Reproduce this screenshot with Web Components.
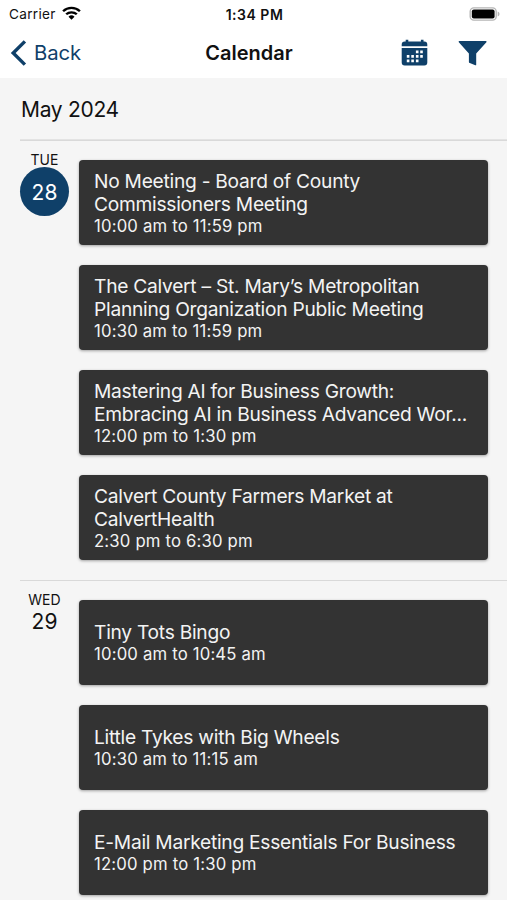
<!DOCTYPE html>
<html lang="en">
<head>
<meta charset="utf-8">
<title>Calendar</title>
<style>
    body {
        margin: 0;
        height: 900px;
        overflow: hidden;
        background-color: #f5f5f5;
        color: #111;
        font-family: Inter, "Liberation Sans", sans-serif;
    }
</style>
</head>
<body>
<calendar-screen>
    <status-bar slot="top" carrier="Carrier" time="1:34 PM"></status-bar>
    <nav-bar slot="top" back="Back">Calendar</nav-bar>
    <month-header>May 2024</month-header>
    <day-group weekday="TUE" date="28" today>
        <event-card time="10:00 am to 11:59 pm">No Meeting - Board of County Commissioners Meeting</event-card>
        <event-card time="10:30 am to 11:59 pm">The Calvert – St. Mary’s Metropolitan Planning Organization Public Meeting</event-card>
        <event-card time="12:00 pm to 1:30 pm">Mastering AI for Business Growth: Embracing AI in Business Advanced Wor...</event-card>
        <event-card time="2:30 pm to 6:30 pm">Calvert County Farmers Market at CalvertHealth</event-card>
    </day-group>
    <day-group weekday="WED" date="29">
        <event-card time="10:00 am to 10:45 am">Tiny Tots Bingo</event-card>
        <event-card time="10:30 am to 11:15 am">Little Tykes with Big Wheels</event-card>
        <event-card time="12:00 pm to 1:30 pm">E-Mail Marketing Essentials For Business</event-card>
    </day-group>
</calendar-screen>

<script>
class CalendarScreen extends HTMLElement {
    constructor() {
        super();
        this.attachShadow({ mode: 'open' });
        this.shadowRoot.innerHTML = `
        <style>
            :host {
                display: flex;
                flex-direction: column;
                height: 900px;
                overflow: hidden;
            }
            header {
                flex: none;
                background-color: #fff;
            }
            main {
                flex: 1;
                min-height: 0;
                overflow: hidden;
            }
        </style>
        <header><slot name="top"></slot></header>
        <main><slot></slot></main>
        `;
    }
}

class StatusBar extends HTMLElement {
    constructor() {
        super();
        this.attachShadow({ mode: 'open' });
        this.shadowRoot.innerHTML = `
        <style>
            :host {
                display: grid;
                grid-template-columns: 1fr auto 1fr;
                align-items: center;
                height: 27px;
                padding: 0 7px 0 9px;
                font-size: 13.6px;
                line-height: 27px;
            }
            .carrier {
                display: flex;
                align-items: center;
                gap: 6px;
                letter-spacing: 0.3px;
            }
            .carrier span {
                padding-top: 1px;
            }
            .carrier svg {
                margin-bottom: 3px;
            }
            .time {
                font-size: 14px;
                font-weight: 600;
                letter-spacing: 0.5px;
            }
            .battery {
                justify-self: end;
            }
            svg {
                display: block;
            }
        </style>
        <div class="carrier">
            <span>${this.getAttribute('carrier')}</span>
            <svg width="19" height="14" viewBox="0 0 19 15" preserveAspectRatio="none" fill="none" stroke="#000" stroke-width="2.4">
                <path d="M1.1 5.6a11.9 11.9 0 0 1 16.8 0"/>
                <path d="M4.2 8.9a7.5 7.5 0 0 1 10.6 0"/>
                <path d="M9.5 14.6l-3-3.1a4.3 4.3 0 0 1 6 0z" fill="#000" stroke="none"/>
            </svg>
        </div>
        <div class="time">${this.getAttribute('time')}</div>
        <svg class="battery" width="31" height="14" viewBox="0 0 31 14">
            <rect x="1.2" y="0.9" width="26" height="12.2" rx="3.6" fill="#fff" stroke="#b5b5b5" stroke-width="1.4"/>
            <rect x="2.8" y="2.5" width="22.8" height="9" rx="2" fill="#000"/>
            <path d="M28.7 4.6c2.4.9 2.4 4 0 4.9z" fill="#b5b5b5"/>
        </svg>
        `;
    }
}

class NavBar extends HTMLElement {
    constructor() {
        super();
        this.attachShadow({ mode: 'open' });
        this.shadowRoot.innerHTML = `
        <style>
            :host {
                display: grid;
                grid-template-columns: 1fr auto 1fr;
                align-items: center;
                height: 51px;
                padding: 0 20px 0 10px;
                color: #0f4069;
                line-height: 24px;
            }
            .back {
                display: flex;
                align-items: center;
                gap: 7px;
                font-size: 20.3px;
                letter-spacing: -0.1px;
            }
            h1 {
                margin: 0;
                padding-left: 1px;
                color: #111;
                font-size: 20px;
                font-weight: 600;
            }
            .actions {
                display: flex;
                justify-content: flex-end;
                align-items: center;
                gap: 30.5px;
            }
            svg {
                display: block;
            }
        </style>
        <div class="back">
            <svg width="17" height="26" viewBox="0 0 17 26" fill="none" stroke="currentColor" stroke-width="3.4">
                <path d="M14.9 1.4L3.2 13l11.7 11.6"/>
            </svg>
            <span>${this.getAttribute('back')}</span>
        </div>
        <h1><slot></slot></h1>
        <div class="actions">
            <svg width="27" height="27" viewBox="0 0 27 27" fill="currentColor">
                <path d="M.7 7.2V5.4Q.7 2.4 3.7 2.4h1V.8h2.6v1.6h12.6V.8h2.6v1.6h.8q3 0 3 3v1.8z"/>
                <path d="M.7 9.1h25.6v14.4q0 3-3 3H3.7q-3 0-3-3z"/>
                <g fill="#fff">
                    <path d="M14.9 11.6h2.6v2.6h-2.6zM19.2 11.6h2.6v2.6h-2.6z"/>
                    <path d="M5.8 16.1h2.6v2.6H5.8zM10.3 16.1h2.6v2.6h-2.6zM14.9 16.1h2.6v2.6h-2.6zM19.2 16.1h2.6v2.6h-2.6z"/>
                    <path d="M5.8 20.6h2.6v2.6H5.8zM10.3 20.6h2.6v2.6h-2.6zM14.9 20.6h2.6v2.6h-2.6z"/>
                </g>
            </svg>
            <svg width="29" height="26" viewBox="0 0 29 26" fill="currentColor">
                <path d="M1.4 1h26.4q1.2 0 .6 1.2L18.2 13.4V24.7q0 .8-.9.5l-5.5-2.1q-.9-.4-.9-1.2v-8.5L.8 2.2Q.2 1 1.4 1z"/>
            </svg>
        </div>
        `;
    }
}

class MonthHeader extends HTMLElement {
    constructor() {
        super();
        this.attachShadow({ mode: 'open' });
        this.shadowRoot.innerHTML = `
        <style>
            :host {
                display: block;
                box-sizing: border-box;
                height: 62px;
                margin-left: 20px;
                border-bottom: 1px solid #e3e3e3;
                padding-left: 1px;
                font-size: 21px;
                line-height: 64px;
                letter-spacing: -0.3px;
            }
        </style>
        <slot></slot>
        `;
    }
}

class DayGroup extends HTMLElement {
    constructor() {
        super();
        this.attachShadow({ mode: 'open' });
        this.shadowRoot.innerHTML = `
        <style>
            :host {
                display: flex;
                gap: 10px;
                margin-left: 20px;
                border-top: 1px solid #d9d9d9;
                padding-right: 19.5px;
            }
            .day {
                flex: none;
                width: 49px;
                padding-top: 11px;
                text-align: center;
            }
            .weekday {
                font-size: 14px;
                line-height: 15px;
                letter-spacing: 0.1px;
            }
            .date {
                font-size: 21px;
                line-height: 30px;
            }
            :host([today]) .date {
                height: 49px;
                border-radius: 50%;
                background-color: #0f4069;
                color: #fff;
                line-height: 51px;
            }
            .events {
                flex: 1;
                display: flex;
                flex-direction: column;
                gap: 20px;
                padding: 19px 0 20px;
            }
        </style>
        <div class="day">
            <div class="weekday">${this.getAttribute('weekday')}</div>
            <div class="date">${this.getAttribute('date')}</div>
        </div>
        <div class="events"><slot></slot></div>
        `;
    }
}

class EventCard extends HTMLElement {
    constructor() {
        super();
        this.attachShadow({ mode: 'open' });
        this.shadowRoot.innerHTML = `
        <style>
            :host {
                display: flex;
                flex-direction: column;
                justify-content: center;
                box-sizing: border-box;
                height: 85px;
                padding: 1px 15px 0;
                border-radius: 4px;
                background-color: #333;
                box-shadow: 0 1px 3px rgba(0, 0, 0, 0.35);
                color: #f3f3f3;
            }
            .title {
                font-size: 19.2px;
                line-height: 23px;
                letter-spacing: -0.26px;
            }
            .time {
                font-size: 16.7px;
                line-height: 21px;
                letter-spacing: 0.18px;
            }
        </style>
        <div class="title"><slot></slot></div>
        <div class="time">${this.getAttribute('time')}</div>
        `;
    }
}

customElements.define('calendar-screen', CalendarScreen);
customElements.define('status-bar', StatusBar);
customElements.define('nav-bar', NavBar);
customElements.define('month-header', MonthHeader);
customElements.define('day-group', DayGroup);
customElements.define('event-card', EventCard);
</script>
</body>
</html>
